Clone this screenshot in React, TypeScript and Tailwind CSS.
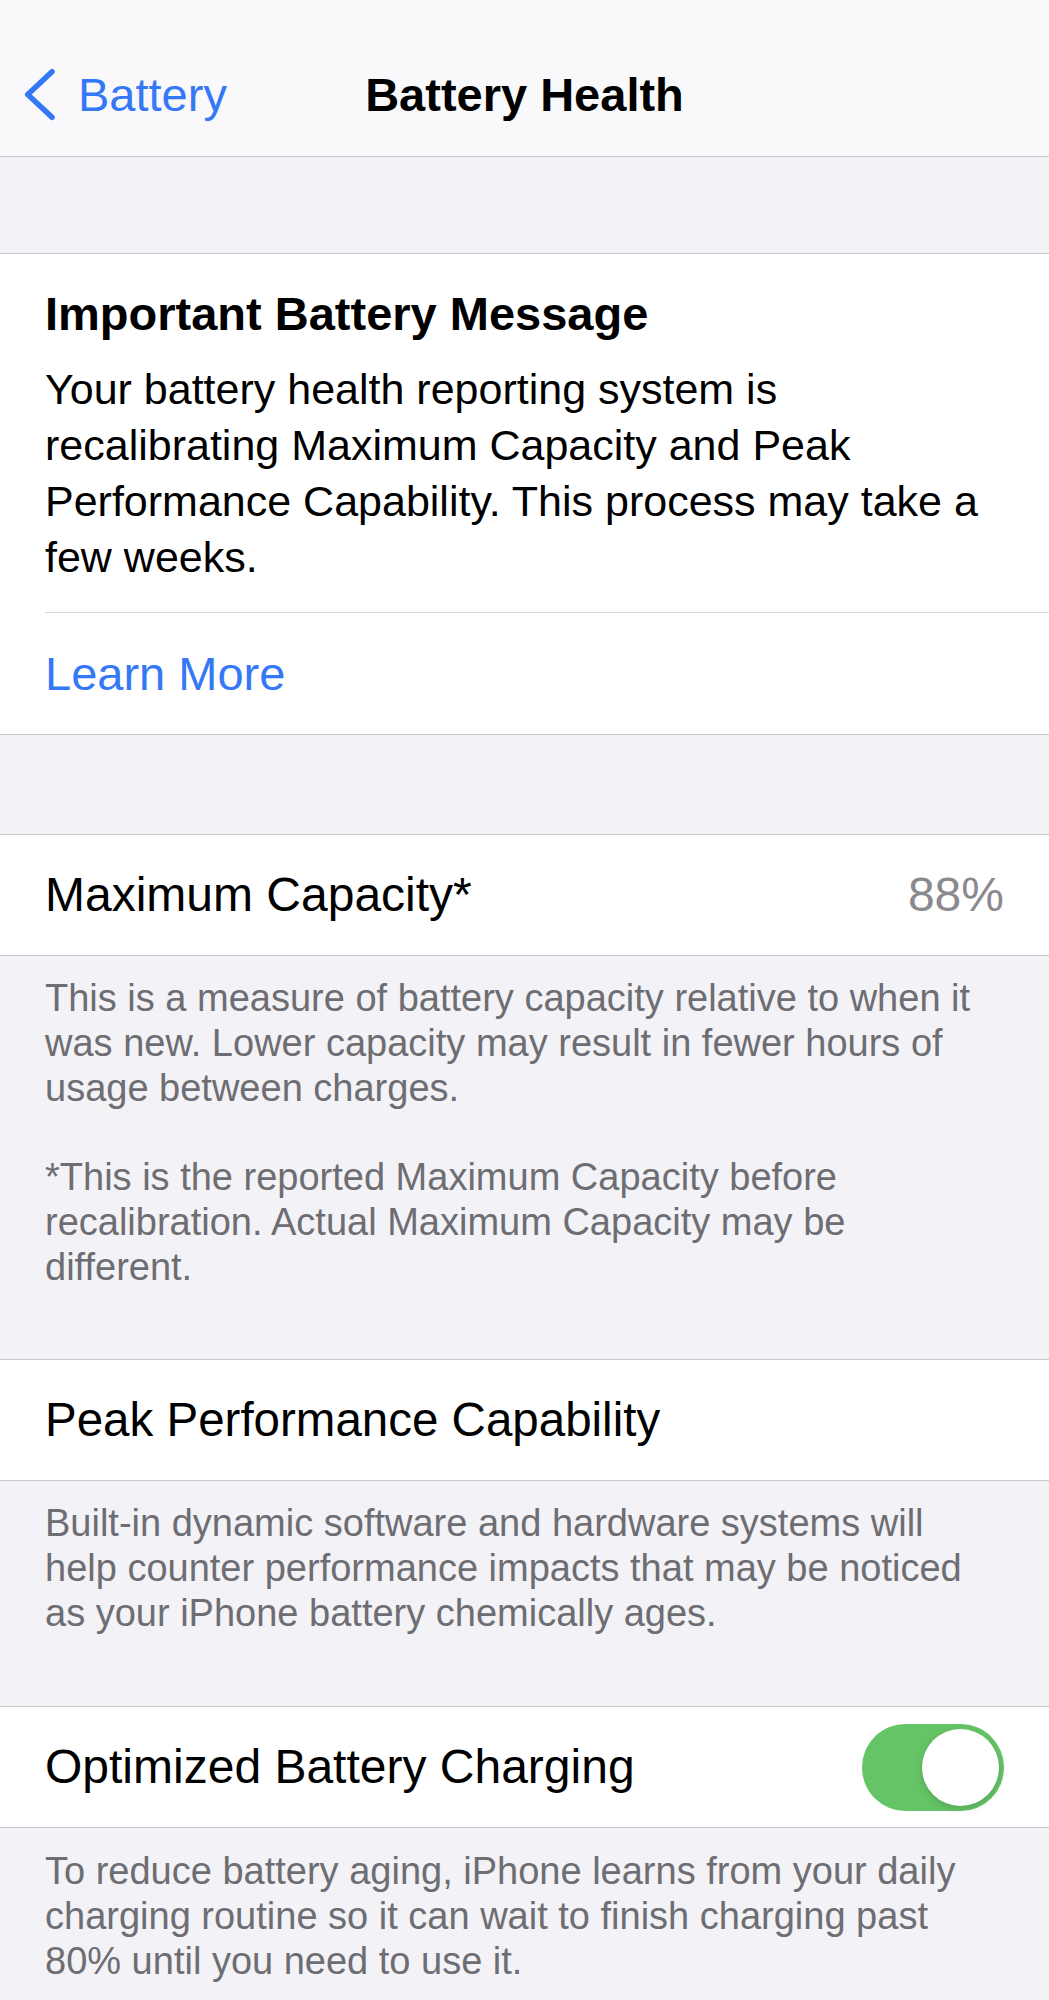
import React from 'react';

const cardBody = [
    'Your battery health reporting system is',
    'recalibrating Maximum Capacity and Peak',
    'Performance Capability. This process may take a',
    'few weeks.',
];

const capacityNote = [
    'This is a measure of battery capacity relative to when it',
    'was new. Lower capacity may result in fewer hours of',
    'usage between charges.',
];

const recalNote = [
    '*This is the reported Maximum Capacity before',
    'recalibration. Actual Maximum Capacity may be',
    'different.',
];

const peakNote = [
    'Built-in dynamic software and hardware systems will',
    'help counter performance impacts that may be noticed',
    'as your iPhone battery chemically ages.',
];

const chargingNote = [
    'To reduce battery aging, iPhone learns from your daily',
    'charging routine so it can wait to finish charging past',
    '80% until you need to use it.',
];

// footer text under a grouped row
const Footer = ({ paras, className = '' }: { paras: string[][]; className?: string }) => (
    <div className={`px-[45px] text-[38px] leading-[45px] text-[#6d6d72] ${className}`}>
        {paras.map((lines, i) => (
            <div key={i} className={i > 0 ? 'mt-[44px]' : ''}>
                {lines.map((l) => (
                    <div key={l} className="whitespace-nowrap">{l}</div>
                ))}
            </div>
        ))}
    </div>
);

const Row = ({ children }: { children: React.ReactNode }) => (
    <div className="bg-white border-y border-[#c8c7cc]">
        <div className="h-[120px] flex items-center justify-between px-[45px] text-[48px] leading-[56px] text-black">
            {children}
        </div>
    </div>
);

const Toggle = () => (
    <div className="w-[142px] h-[87px] rounded-full bg-[#65c466] flex items-center justify-end p-[5px]">
        <div className="w-[77px] h-[77px] rounded-full bg-white shadow-[0_3px_8px_rgba(0,0,0,0.15)]" />
    </div>
);

export default function App() {
    return (
        <div className="w-[1049px] min-h-[2000px] bg-[#f2f2f7] font-['Liberation_Sans',Arial,sans-serif] overflow-hidden">
            {/* nav bar */}
            <div className="h-[157px] pt-[34px] bg-[#f9f9fb] border-b border-[#c8c7cc] grid grid-cols-[1fr_auto_1fr] items-center">
                <div className="flex items-center pl-[23px] text-[#3478f6]">
                    <svg width="34" height="56" viewBox="0 0 34 56" fill="none">
                        <path d="M29 4.75 L4.75 27.5 L29 50.25" stroke="currentColor" strokeWidth="5.5" strokeLinecap="round" strokeLinejoin="round" />
                    </svg>
                    <span className="ml-[21px] text-[47px] leading-[56px]">Battery</span>
                </div>
                <div className="text-[47px] leading-[56px] font-bold text-black">Battery Health</div>
                <div />
            </div>

            <div className="h-[96px]" />

            {/* message card */}
            <div className="bg-white border-y border-[#c8c7cc]">
                <div className="px-[45px] pt-[32px] pb-[27px]">
                    <div className="text-[47px] leading-[56px] font-bold text-black">Important Battery Message</div>
                    <div className="mt-[19px] text-[43px] leading-[56px] text-black">
                        {cardBody.map((l) => (
                            <div key={l} className="whitespace-nowrap">{l}</div>
                        ))}
                    </div>
                </div>
                <div className="ml-[45px] border-t border-[#d8d8dc] h-[122px] flex items-center text-[47px] leading-[56px] text-[#3478f6]">
                    Learn More
                </div>
            </div>

            <div className="h-[99px]" />

            <Row>
                <span>Maximum Capacity*</span>
                <span className="text-[#8a8a8e]">88%</span>
            </Row>
            <Footer paras={[capacityNote, recalNote]} className="pt-[20px] pb-[69px]" />

            <Row>
                <span className="text-[47.5px]">Peak Performance Capability</span>
            </Row>
            <Footer paras={[peakNote]} className="pt-[20px] pb-[70px]" />

            <Row>
                <span>Optimized Battery Charging</span>
                <Toggle />
            </Row>
            <Footer paras={[chargingNote]} className="pt-[21px] pb-[40px]" />
        </div>
    );
}
